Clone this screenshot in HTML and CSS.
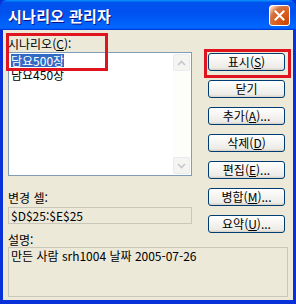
FILE: index.html
```html
<!DOCTYPE html>
<html lang="ko">
<head>
    <meta charset="UTF-8">
    <title>시나리오 관리자</title>
    <link rel="stylesheet" href="styles.css">
</head>
<body>
    <div class="window">
        <div class="titlebar">
            <span class="title">시나리오 관리자</span>
            <span class="close">
                <svg width="11" height="11" viewBox="0 0 11 11"><path d="M1.5 1.5 L9.5 9.5 M9.5 1.5 L1.5 9.5" stroke="#fff" stroke-width="2" stroke-linecap="square"/></svg>
            </span>
        </div>
        <div class="body">
            <div class="top">
                <div class="left">
                    <div class="label">시나리오(<u>C</u>):</div>
                    <div class="listbox">
                        <ul class="items">
                            <li><span class="sel">담요500장</span></li>
                            <li>담요450장</li>
                        </ul>
                        <div class="scroll">
                            <div class="arrow">
                                <svg width="9" height="6" viewBox="0 0 9 6"><path d="M1 5 L4.5 1.5 L8 5" fill="none" stroke="#c3c8d0" stroke-width="1.6"/></svg>
                            </div>
                            <div class="track"></div>
                            <div class="arrow">
                                <svg width="9" height="6" viewBox="0 0 9 6"><path d="M1 1 L4.5 4.5 L8 1" fill="none" stroke="#c3c8d0" stroke-width="1.6"/></svg>
                            </div>
                        </div>
                    </div>
                    <div class="label cells-label">변경 셀:</div>
                    <div class="field">$D$25:$E$25</div>
                </div>
                <div class="buttons">
                    <button class="btn">표시(<u>S</u>)</button>
                    <button class="btn">닫기</button>
                    <button class="btn">추가(<u>A</u>)...</button>
                    <button class="btn">삭제(<u>D</u>)</button>
                    <button class="btn">편집(<u>E</u>)...</button>
                    <button class="btn">병합(<u>M</u>)...</button>
                    <button class="btn">요약(<u>U</u>)...</button>
                </div>
            </div>
            <div class="label desc-label">설명:</div>
            <div class="field desc">만든 사람 srh1004 날짜 2005-07-26</div>
        </div>
        <div class="mark mark-list"></div>
        <div class="mark mark-show"></div>
    </div>
</body>
</html>
```

FILE: styles.css
```css
body {
    margin: 0;
    font-family: "Noto Sans CJK KR", "Liberation Sans", sans-serif;
    font-size: 12px;
    color: #000;
}
.window {
    position: relative;
    width: 296px;
    height: 304px;
    box-sizing: border-box;
    background: #0831d9;
    padding: 0 3px 4px 3px;
    display: flex;
    flex-direction: column;
}
.titlebar {
    height: 30px;
    margin: 0 -3px;
    padding: 0 6px 0 8px;
    display: flex;
    align-items: center;
    justify-content: space-between;
    border-radius: 7px 7px 0 0;
    background: linear-gradient(180deg, #0997ff, #0053ee 8%, #0050ee 40%, #0066ff 88%, #0066ff 93%, #005bff 95%, #003dd7 96%, #003dd7);
}
.title {
    color: #fff;
    font-size: 15px;
    font-weight: bold;
    letter-spacing: 0.3px;
    text-shadow: 1px 1px #0f1089;
}
.close {
    width: 21px;
    height: 21px;
    box-sizing: border-box;
    border: 1px solid #fff;
    border-radius: 3px;
    background: radial-gradient(circle at 90% 90%, #cc4600 0%, #dc6527 55%, #cd7546 70%, #ffccb2 90%, #fff 100%);
    background-color: #e04343;
    display: flex;
    align-items: center;
    justify-content: center;
}
.body {
    flex: 1;
    background: #ece9d8;
    padding: 6px 5px 3px 5px;
}
.top {
    display: grid;
    grid-template-columns: 184px 77px;
    column-gap: 16px;
}
.label {
    line-height: 16px;
}
.label u, .btn u {
    text-decoration: underline;
}
.listbox {
    height: 124px;
    box-sizing: border-box;
    border: 1px solid #7f9db9;
    background: #fff;
    display: flex;
}
.items {
    flex: 1;
    list-style: none;
    margin: 0;
    padding: 1px 0 0 2px;
}
.items li {
    line-height: 14px;
    height: 14px;
}
.sel {
    display: inline-block;
    line-height: 13px;
    background: #316ac5;
    color: #fff;
}
.scroll {
    width: 17px;
    margin: 1px 1px 1px 0;
    display: flex;
    flex-direction: column;
    background: #fdfdfa;
}
.arrow {
    height: 17px;
    box-sizing: border-box;
    border: 1px solid #e8ebf1;
    border-radius: 2px;
    background: #f4f4f0;
    display: flex;
    align-items: center;
    justify-content: center;
}
.track {
    flex: 1;
}
.cells-label {
    margin-top: 14px;
}
.field {
    margin-top: 1px;
    height: 17px;
    box-sizing: border-box;
    border: 1px solid #c9c7ba;
    padding: 0 2px;
    line-height: 15px;
    white-space: nowrap;
}
.buttons {
    padding-top: 17px;
    display: flex;
    flex-direction: column;
    gap: 9px;
}
.btn {
    height: 18px;
    padding: 0;
    font: inherit;
    line-height: 14px;
    color: #000;
    border: 1px solid #003c74;
    border-radius: 3px;
    background: linear-gradient(180deg, #fff, #ecebe6 86%, #d6d0c5);
}
.desc-label {
    margin-top: 0;
    line-height: 13px;
}
.desc {
    margin-top: 1px;
    height: 50px;
    line-height: 16px;
}
.mark {
    position: absolute;
    border: 3px solid #e0141e;
    box-sizing: border-box;
}
.mark-list {
    left: 6px;
    top: 33px;
    width: 102px;
    height: 38px;
}
.mark-show {
    left: 204px;
    top: 49px;
    width: 87px;
    height: 29px;
}
```
